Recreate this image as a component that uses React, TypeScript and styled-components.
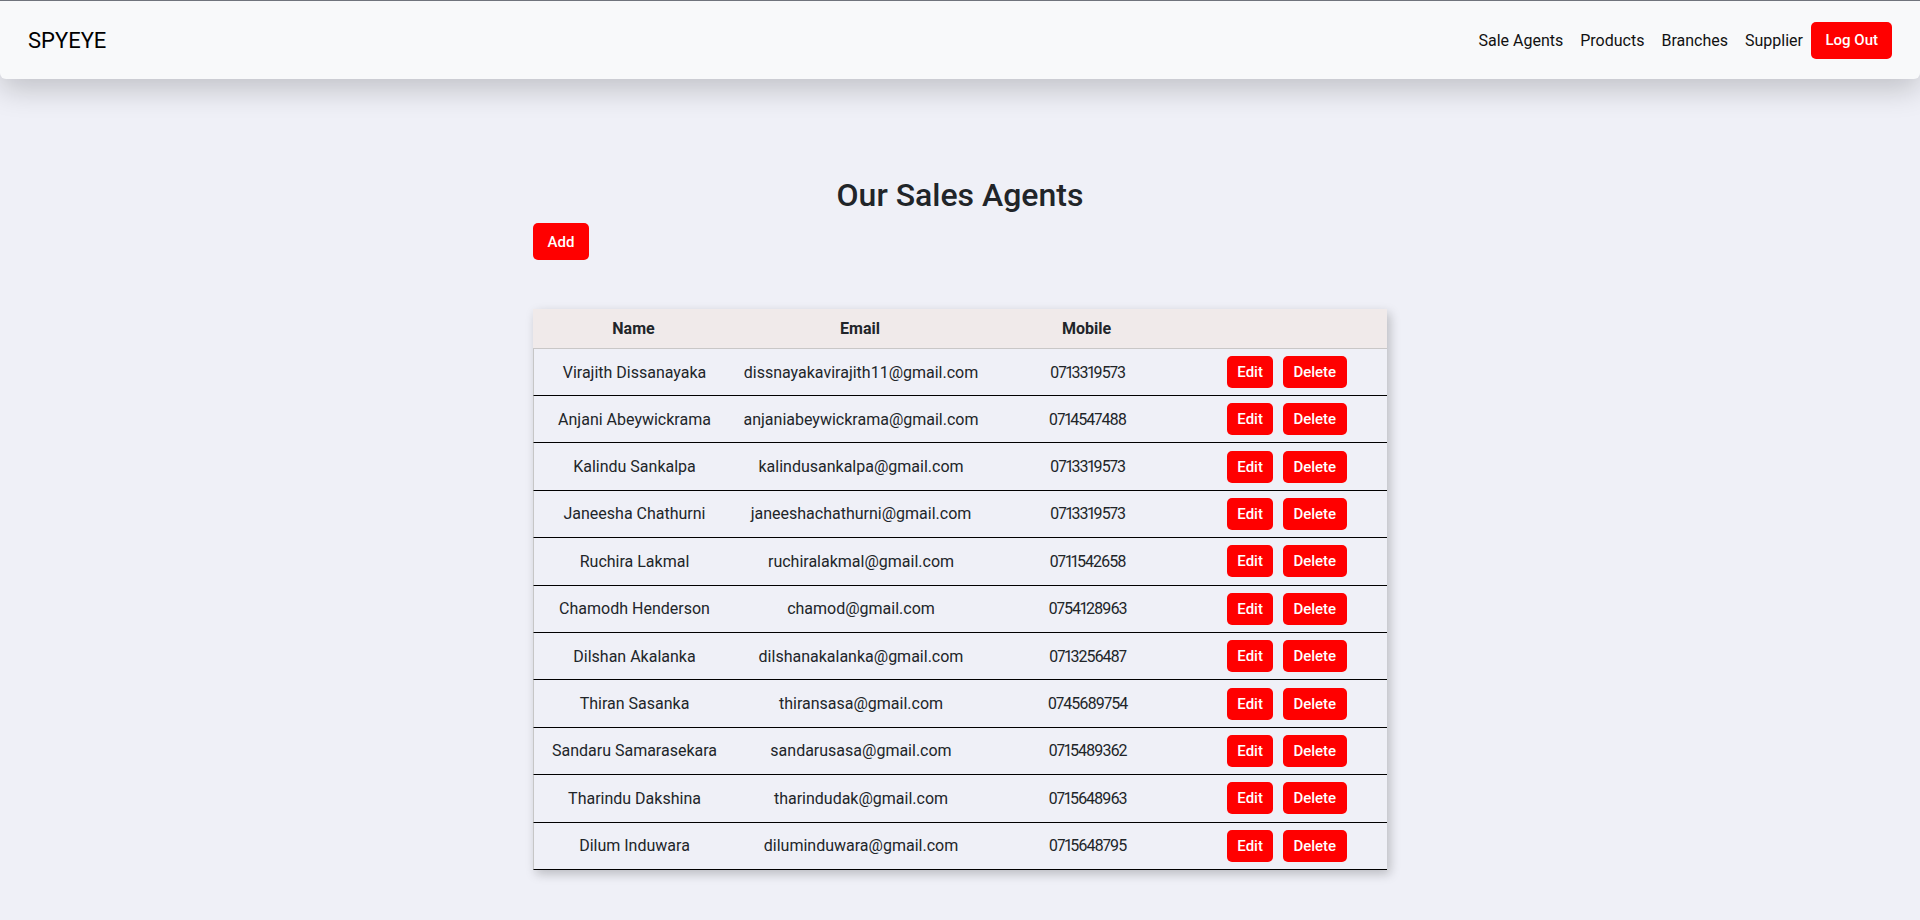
import React from "react";
import styled, { createGlobalStyle } from "styled-components";

const GlobalStyle = createGlobalStyle`
  * { box-sizing: border-box; }
  html, body {
    margin: 0;
    padding: 0;
    background: #eff0f7;
    font-family: Roboto, "Liberation Sans", sans-serif;
    color: #212529;
  }
`;

const Page = styled.div`
  min-height: 920px;
  background: #eff0f7;
`;

const NavBar = styled.nav`
  height: 79px;
  display: flex;
  align-items: center;
  justify-content: space-between;
  padding: 0 28px;
  background: #f8f9fa;
  border-top: 1px solid #70747c;
  border-radius: 0 0 6px 6px;
  box-shadow: 0 10px 30px rgba(0, 0, 0, 0.2);
`;

const Brand = styled.div`
  font-size: 22px;
  font-weight: 400;
  color: #000;
  padding-top: 1px;
`;

const NavLinks = styled.div`
  display: flex;
  align-items: center;
`;

const NavLink = styled.a`
  font-size: 16px;
  color: #111;
  padding: 0 8.5px;
  text-decoration: none;
  cursor: pointer;
`;

const RedButton = styled.button<{ $px: number; $h: number }>`
  height: ${(p) => p.$h}px;
  padding: 0 ${(p) => p.$px}px;
  background: #ff0000;
  color: #fff;
  border: none;
  border-radius: 5px;
  font-family: Roboto, "Liberation Sans", sans-serif;
  font-size: 15px;
  font-weight: 500;
  cursor: pointer;
`;

const Main = styled.main`
  width: 854px;
  margin: 0 auto;
  padding-top: 98px;
`;

const Title = styled.h2`
  margin: 0;
  text-align: center;
  font-size: 32px;
  font-weight: 500;
  line-height: 36px;
  color: #212529;
`;

const Toolbar = styled.div`
  margin-top: 10px;
  display: flex;
`;

const Table = styled.div`
  margin-top: 49px;
  box-shadow: 3px 4px 10px rgba(0, 0, 0, 0.22);
`;

const cols = "201px 252px 201px 200px";

const HeadRow = styled.div`
  display: grid;
  grid-template-columns: ${cols};
  height: 40px;
  background: #f0eaea;
  border-bottom: 1px solid #c9c7c7;
  align-items: center;
`;

const HeadCell = styled.div`
  text-align: center;
  font-size: 16px;
  font-weight: 700;
  color: #212529;
`;

const Row = styled.div<{ $first?: boolean }>`
  display: grid;
  grid-template-columns: ${cols};
  height: ${(p) => (p.$first ? 47 : 47.4)}px;
  align-items: center;
  border-bottom: 1px solid #000;
  border-left: 1px solid #c6c6c6;
  background: #eff0f7;
`;

const Cell = styled.div<{ $numeric?: boolean }>`
  text-align: center;
  font-size: 16px;
  color: #212529;
  white-space: nowrap;
  font-variant-numeric: ${(p) => (p.$numeric ? "proportional-nums" : "normal")};
  letter-spacing: ${(p) => (p.$numeric ? "-1px" : "0")};
`;

const Actions = styled.div`
  display: flex;
  justify-content: center;
  gap: 10px;
  padding-right: 2px;
`;

const agents = [
  ["Virajith Dissanayaka", "dissnayakavirajith11@gmail.com", "0713319573"],
  ["Anjani Abeywickrama", "anjaniabeywickrama@gmail.com", "0714547488"],
  ["Kalindu Sankalpa", "kalindusankalpa@gmail.com", "0713319573"],
  ["Janeesha Chathurni", "janeeshachathurni@gmail.com", "0713319573"],
  ["Ruchira Lakmal", "ruchiralakmal@gmail.com", "0711542658"],
  ["Chamodh Henderson", "chamod@gmail.com", "0754128963"],
  ["Dilshan Akalanka", "dilshanakalanka@gmail.com", "0713256487"],
  ["Thiran Sasanka", "thiransasa@gmail.com", "0745689754"],
  ["Sandaru Samarasekara", "sandarusasa@gmail.com", "0715489362"],
  ["Tharindu Dakshina", "tharindudak@gmail.com", "0715648963"],
  ["Dilum Induwara", "diluminduwara@gmail.com", "0715648795"],
];

export default function App() {
  return (
    <Page>
      <GlobalStyle />
      <NavBar>
        <Brand>SPYEYE</Brand>
        <NavLinks>
          <NavLink>Sale Agents</NavLink>
          <NavLink>Products</NavLink>
          <NavLink>Branches</NavLink>
          <NavLink>Supplier</NavLink>
          <RedButton $px={14} $h={37}>Log Out</RedButton>
        </NavLinks>
      </NavBar>
      <Main>
        <Title>Our Sales Agents</Title>
        <Toolbar>
          <RedButton $px={14.5} $h={37}>Add</RedButton>
        </Toolbar>
        <Table>
          <HeadRow>
            <HeadCell>Name</HeadCell>
            <HeadCell>Email</HeadCell>
            <HeadCell>Mobile</HeadCell>
            <HeadCell />
          </HeadRow>
          {agents.map(([name, email, mobile], i) => (
            <Row key={i} $first={i === 0}>
              <Cell>{name}</Cell>
              <Cell>{email}</Cell>
              <Cell $numeric>{mobile}</Cell>
              <Actions>
                <RedButton $px={10} $h={32}>Edit</RedButton>
                <RedButton $px={10.5} $h={32}>Delete</RedButton>
              </Actions>
            </Row>
          ))}
        </Table>
      </Main>
    </Page>
  );
}
